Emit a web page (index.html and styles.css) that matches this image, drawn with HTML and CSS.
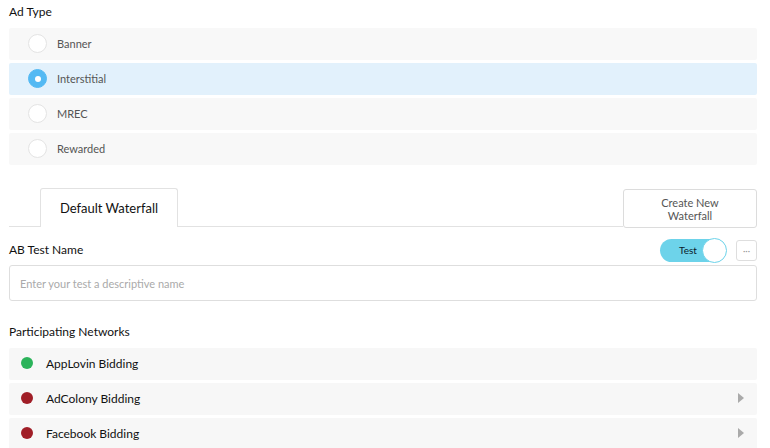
FILE: index.html
```html
<!DOCTYPE html>
<html>
<head>
<meta charset="utf-8">
<link rel="stylesheet" href="styles.css">
</head>
<body>
<div class="page">
  <div class="label first">Ad Type</div>
  <div class="options">
    <div class="option"><span class="radio"></span><span>Banner</span></div>
    <div class="option selected"><span class="radio on"></span><span>Interstitial</span></div>
    <div class="option"><span class="radio"></span><span>MREC</span></div>
    <div class="option"><span class="radio"></span><span>Rewarded</span></div>
  </div>

  <div class="tabs">
    <div class="tab-line"></div>
    <div class="tab">Default Waterfall</div>
    <div class="tab-line grow"></div>
    <button class="create">Create New<br>Waterfall</button>
  </div>

  <div class="ab-row">
    <div class="label">AB Test Name</div>
    <div class="ab-controls">
      <div class="toggle"><span class="toggle-text">Test</span><span class="knob"></span></div>
      <div class="more">···</div>
    </div>
  </div>
  <div class="input">Enter your test a descriptive name</div>

  <div class="label networks-label">Participating Networks</div>
  <div class="networks">
    <div class="network"><span class="dot green"></span><span class="name">AppLovin Bidding</span></div>
    <div class="network"><span class="dot red"></span><span class="name">AdColony Bidding</span><span class="arrow"></span></div>
    <div class="network"><span class="dot red"></span><span class="name">Facebook Bidding</span><span class="arrow"></span></div>
  </div>
</div>
</body>
</html>
```

FILE: styles.css
```css
html, body {
  margin: 0;
  padding: 0;
  background: #fff;
}
body {
  font-family: Lato, "Noto Sans", sans-serif;
  color: #111;
  overflow: hidden;
  height: 448px;
}
.page {
  width: 748px;
  padding: 0 13px 0 9px;
}
.label {
  font-size: 12px;
  color: #111;
  line-height: 16px;
}
.label.first {
  padding-top: 4px;
  height: 24px;
}
.options {
  display: flex;
  flex-direction: column;
  gap: 3px;
}
.option {
  height: 32px;
  background: #f8f8f8;
  border-radius: 2px;
  display: flex;
  align-items: center;
  font-size: 11px;
  color: #555;
  padding-bottom: 1px;
  box-sizing: border-box;
}
.option.selected {
  background: #e2f1fc;
}
.radio {
  width: 17px;
  height: 17px;
  border-radius: 50%;
  background: #fff;
  border: 1px solid #e4e4e4;
  margin-left: 19px;
  margin-right: 10px;
  box-sizing: content-box;
  display: inline-block;
}
.radio.on {
  background: #53b9f3;
  border-color: #53b9f3;
  position: relative;
}
.radio.on::after {
  content: "";
  position: absolute;
  left: 6px;
  top: 6px;
  width: 6px;
  height: 6px;
  border-radius: 50%;
  background: #fff;
}
.tabs {
  margin-top: 23px;
  display: flex;
  align-items: flex-end;
  height: 39px;
}
.tab-line {
  width: 31px;
  border-bottom: 1px solid #e2e2e2;
}
.tab-line.grow {
  flex: 1;
}
.tab {
  width: 136px;
  height: 38px;
  border: 1px solid #e2e2e2;
  border-bottom: none;
  border-radius: 3px 3px 0 0;
  display: flex;
  align-items: center;
  justify-content: center;
  font-size: 13px;
  color: #111;
}
.create {
  width: 134px;
  height: 39px;
  border: 1px solid #dcdcdc;
  border-radius: 3px;
  background: #fff;
  font-family: Lato, "Noto Sans", sans-serif;
  font-size: 11px;
  color: #555;
  line-height: 13px;
  padding: 0;
  margin-bottom: -1px;
}
.ab-row {
  display: flex;
  justify-content: space-between;
  align-items: center;
  margin-top: 11px;
  height: 24px;
}
.ab-controls {
  display: flex;
  align-items: center;
  gap: 10px;
}
.toggle {
  width: 66px;
  height: 23px;
  border-radius: 12px;
  background: #6dd3ea;
  position: relative;
  display: flex;
  align-items: center;
}
.toggle-text {
  font-size: 10px;
  color: #0b1b2c;
  margin-left: 19px;
}
.knob {
  position: absolute;
  top: -1px;
  right: -1px;
  width: 23px;
  height: 23px;
  border-radius: 50%;
  background: #fff;
  border: 1px solid #6dd3ea;
  box-sizing: content-box;
}
.more {
  width: 19px;
  height: 19px;
  border: 1px solid #dedede;
  border-radius: 3px;
  font-size: 9px;
  color: #999;
  display: flex;
  align-items: center;
  justify-content: center;
  line-height: 1;
}
.input {
  margin-top: 3px;
  height: 34px;
  border: 1px solid #dedede;
  border-radius: 3px;
  display: flex;
  align-items: center;
  padding-left: 10px;
  font-size: 11px;
  color: #aaa;
}
.networks-label {
  margin-top: 23px;
  height: 24px;
}
.networks {
  display: flex;
  flex-direction: column;
  gap: 3px;
}
.network {
  height: 32px;
  background: #f7f7f7;
  border-radius: 2px;
  display: flex;
  align-items: center;
  font-size: 12px;
  color: #111;
  padding-bottom: 2px;
  box-sizing: border-box;
}
.dot {
  width: 12px;
  height: 12px;
  border-radius: 50%;
  margin-left: 12px;
  margin-right: 13px;
}
.dot.green { background: #2bb35a; }
.dot.red { background: #a01e27; }
.name {
  flex: 1;
}
.arrow {
  width: 0;
  height: 0;
  border-top: 5px solid transparent;
  border-bottom: 5px solid transparent;
  border-left: 6px solid #aaa;
  margin-right: 13px;
}
```
